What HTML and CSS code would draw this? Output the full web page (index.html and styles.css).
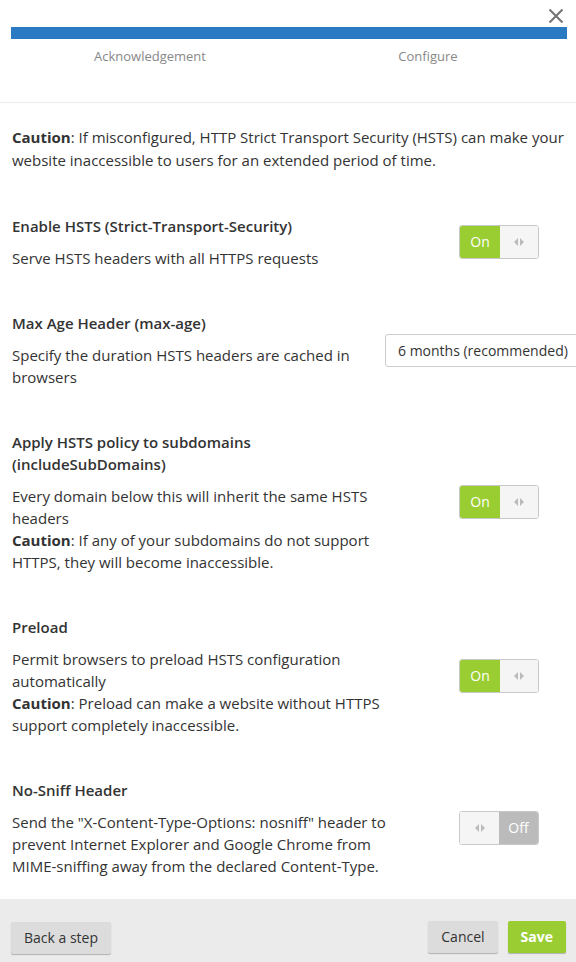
FILE: index.html
```html
<!DOCTYPE html>
<html>
<head>
<meta charset="utf-8">
<link rel="stylesheet" href="styles.css">
</head>
<body>
<div class="dialog">
  <div class="topbar">
    <button class="close" aria-label="Close">
      <svg width="16" height="16" viewBox="0 0 16 16"><path d="M1.5 1.5 L14.5 14.5 M14.5 1.5 L1.5 14.5" stroke="#737373" stroke-width="2" fill="none"/></svg>
    </button>
  </div>
  <div class="progress"></div>
  <div class="steps">
    <div class="step">Acknowledgement</div>
    <div class="step">Configure</div>
  </div>
  <div class="content">
    <p class="intro"><b>Caution</b>: If misconfigured, HTTP Strict Transport Security (HSTS) can make your website inaccessible to users for an extended period of time.</p>

    <div class="row">
      <div class="text">
        <div class="title">Enable HSTS (Strict-Transport-Security)</div>
        <div class="desc">Serve HSTS headers with all HTTPS requests</div>
      </div>
      <div class="control">
        <div class="toggle on"><span class="lbl">On</span><span class="knob"><i class="al"></i><i class="ar"></i></span></div>
      </div>
    </div>

    <div class="row">
      <div class="text">
        <div class="title">Max Age Header (max-age)</div>
        <div class="desc">Specify the duration HSTS headers are cached in browsers</div>
      </div>
      <div class="control">
        <div class="select">6 months (recommended)</div>
      </div>
    </div>

    <div class="row">
      <div class="text">
        <div class="title">Apply HSTS policy to subdomains (includeSubDomains)</div>
        <div class="desc">Every domain below this will inherit the same HSTS headers<br><b>Caution</b>: If any of your subdomains do not support HTTPS, they will become inaccessible.</div>
      </div>
      <div class="control">
        <div class="toggle on"><span class="lbl">On</span><span class="knob"><i class="al"></i><i class="ar"></i></span></div>
      </div>
    </div>

    <div class="row">
      <div class="text">
        <div class="title">Preload</div>
        <div class="desc">Permit browsers to preload HSTS configuration automatically<br><b>Caution</b>: Preload can make a website without HTTPS support completely inaccessible.</div>
      </div>
      <div class="control">
        <div class="toggle on"><span class="lbl">On</span><span class="knob"><i class="al"></i><i class="ar"></i></span></div>
      </div>
    </div>

    <div class="row">
      <div class="text">
        <div class="title">No-Sniff Header</div>
        <div class="desc">Send the "X-Content-Type-Options: nosniff" header to prevent Internet Explorer and Google Chrome from MIME-sniffing away from the declared Content-Type.</div>
      </div>
      <div class="control">
        <div class="toggle off"><span class="knob"><i class="al"></i><i class="ar"></i></span><span class="lbl">Off</span></div>
      </div>
    </div>
  </div>
  <div class="footer">
    <button class="btn">Back a step</button>
    <div class="right">
      <button class="btn">Cancel</button>
      <button class="btn save">Save</button>
    </div>
  </div>
</div>
</body>
</html>
```
FILE: styles.css
```css
html, body {
  margin: 0;
  padding: 0;
  background: #fff;
  overflow: hidden;
}
body {
  font-family: "Open Sans", "Liberation Sans", sans-serif;
  color: #333;
  font-size: 15px;
  line-height: 22px;
  width: 576px;
}
.dialog {
  display: flex;
  flex-direction: column;
}
.topbar {
  height: 27px;
  display: flex;
  justify-content: flex-end;
  align-items: flex-start;
}
.close {
  border: 0;
  background: none;
  padding: 0;
  margin: 8px 12px 0 0;
  width: 16px;
  height: 16px;
  display: block;
  cursor: pointer;
}
.close svg { display: block; }
.progress {
  height: 12px;
  margin: 0 9px 0 11px;
  background: #2a7ac3;
}
.steps {
  display: grid;
  grid-template-columns: 1fr 1fr;
  padding: 8px 9px 37px 11px;
  border-bottom: 1px solid #ececec;
}
.step {
  text-align: center;
  font-size: 13px;
  line-height: 18px;
  color: #888;
}
.content {
  padding: 0 12px;
}
.intro {
  margin: 23px 0 0;
  line-height: 23px;
}
.row {
  display: grid;
  grid-template-columns: 390px 1fr;
  align-items: center;
  margin-top: 43px;
}
.title {
  font-weight: 600;
  margin-bottom: 10px;
}
.control {
  display: flex;
}
.toggle {
  margin-left: 57px;
  width: 78px;
  height: 32px;
  border: 1px solid #c8c8c8;
  border-radius: 3px;
  display: flex;
  overflow: hidden;
  font-size: 14px;
}
.toggle .lbl {
  width: 40px;
  display: flex;
  align-items: center;
  justify-content: center;
  color: #fff;
}
.toggle.on .lbl { background: #9acd32; }
.toggle.off .lbl { background: #bbb; width: 39px; }
.toggle .knob {
  flex: 1;
  background: #f5f5f5;
  display: flex;
  align-items: center;
  justify-content: center;
  gap: 2px;
}
.al, .ar {
  display: block;
  width: 0;
  height: 0;
  border-top: 4px solid transparent;
  border-bottom: 4px solid transparent;
}
.al { border-right: 4px solid #bbb; }
.ar { border-left: 4px solid #bbb; }
.select {
  margin-left: -17px;
  width: 220px;
  flex: none;
  height: 31px;
  border: 1px solid #ccc;
  border-radius: 3px;
  padding-left: 12px;
  font-size: 14px;
  line-height: 31px;
  white-space: nowrap;
  color: #333;
}
.footer {
  margin-top: 22px;
  background: #ebebeb;
  height: 65px;
  box-sizing: border-box;
  padding: 23px 10px 0 11px;
  display: flex;
  justify-content: space-between;
  align-items: flex-start;
}
.right {
  display: flex;
  gap: 10px;
  margin-top: -1px;
}
.btn {
  font-family: "Open Sans", "Liberation Sans", sans-serif;
  font-size: 14px;
  color: #333;
  background: #dcdcdc;
  border: 0;
  border-radius: 2px;
  box-shadow: 0 1px 1px rgba(0,0,0,0.25);
  height: 32px;
  padding: 0 13px;
  line-height: 32px;
  cursor: pointer;
}
.btn.save {
  background: #9acd32;
  color: #fff;
  font-weight: 700;
  padding: 0 13px;
}
```
